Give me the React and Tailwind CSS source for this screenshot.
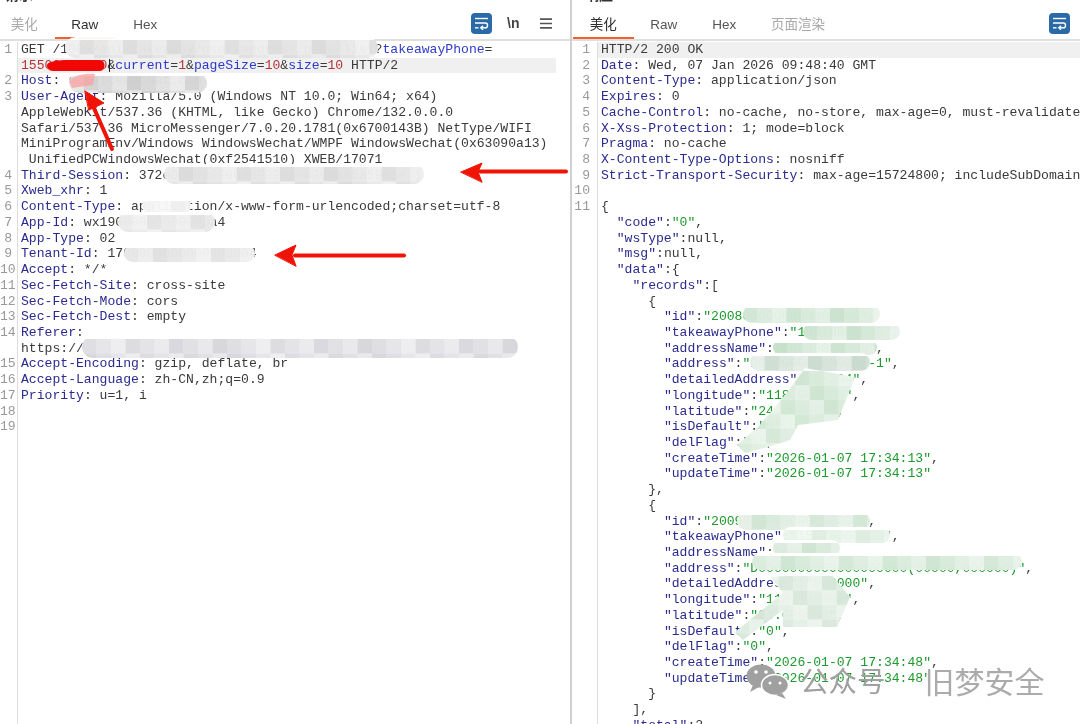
import React from "react";

const KEY = "text-[#2b2b8f]";
const VAL = "text-[#3a3a3a]";
const PARAM = "text-[#2d3ac8]";
const NUM = "text-[#b5343a]";
const STR = "text-[#1d9a2d]";

const header = (n, k, v) => ({ n, parts: [[k, KEY], [": " + v, VAL]] });
const plain = (n, v) => ({ n, parts: [[v, VAL]] });

const requestRows = [
  {
    n: 1,
    parts: [
      ["GET /1000/api/takeaway/user/address/page/list?", VAL],
      ["takeawayPhone", PARAM],
      ["=", VAL],
    ],
  },
  {
    highlight: true,
    parts: [
      ["15500000000", NUM],
      ["&", VAL],
      ["current", PARAM],
      ["=", VAL],
      ["1", NUM],
      ["&", VAL],
      ["pageSize", PARAM],
      ["=", VAL],
      ["10", NUM],
      ["&", VAL],
      ["size", PARAM],
      ["=", VAL],
      ["10", NUM],
      [" HTTP/2", VAL],
    ],
  },
  header(2, "Host", "servicewechat.com"),
  header(3, "User-Agent", "Mozilla/5.0 (Windows NT 10.0; Win64; x64)"),
  plain(null, "AppleWebKit/537.36 (KHTML, like Gecko) Chrome/132.0.0.0"),
  plain(null, "Safari/537.36 MicroMessenger/7.0.20.1781(0x6700143B) NetType/WIFI"),
  plain(null, "MiniProgramEnv/Windows WindowsWechat/WMPF WindowsWechat(0x63090a13)"),
  plain(null, " UnifiedPCWindowsWechat(0xf2541510) XWEB/17071"),
  header(4, "Third-Session", "372e000000000000000000000a85a590ce )"),
  header(5, "Xweb_xhr", "1"),
  header(6, "Content-Type", "application/x-www-form-urlencoded;charset=utf-8"),
  header(7, "App-Id", "wx19000000000000a4"),
  header(8, "App-Type", "02"),
  header(9, "Tenant-Id", "1700000000000000004"),
  header(10, "Accept", "*/*"),
  header(11, "Sec-Fetch-Site", "cross-site"),
  header(12, "Sec-Fetch-Mode", "cors"),
  header(13, "Sec-Fetch-Dest", "empty"),
  { n: 14, parts: [["Referer", KEY], [":", VAL]] },
  plain(null, "https://"),
  header(15, "Accept-Encoding", "gzip, deflate, br"),
  header(16, "Accept-Language", "zh-CN,zh;q=0.9"),
  header(17, "Priority", "u=1, i"),
  { n: 18, parts: [] },
  { n: 19, parts: [] },
];

const jsonLine = (indent, key, value, type, comma = true) => ({
  parts: [
    [" ".repeat(indent), VAL],
    [`"${key}"`, KEY],
    [":", VAL],
    [type === "str" ? `"${value}"` : value, type === "str" ? STR : VAL],
    [comma ? "," : "", VAL],
  ],
});
const punct = (indent, text) => ({ parts: [[" ".repeat(indent) + text, VAL]] });

const record = (id, name, address, detail, created) => [
  jsonLine(8, "id", id, "str"),
  jsonLine(8, "takeawayPhone", "15570000000", "str"),
  jsonLine(8, "addressName", name, "str"),
  jsonLine(8, "address", address, "str"),
  jsonLine(8, "detailedAddress", detail, "str"),
  jsonLine(8, "longitude", "118.000000", "str"),
  jsonLine(8, "latitude", "24.000000", "str"),
  jsonLine(8, "isDefault", "0", "str"),
  jsonLine(8, "delFlag", "0", "str"),
  jsonLine(8, "createTime", created, "str"),
  jsonLine(8, "updateTime", created, "str", false),
];

const responseRows = [
  { n: 1, highlight: true, parts: [["HTTP/2 200 OK", VAL]] },
  header(2, "Date", "Wed, 07 Jan 2026 09:48:40 GMT"),
  header(3, "Content-Type", "application/json"),
  header(4, "Expires", "0"),
  header(5, "Cache-Control", "no-cache, no-store, max-age=0, must-revalidate"),
  header(6, "X-Xss-Protection", "1; mode=block"),
  header(7, "Pragma", "no-cache"),
  header(8, "X-Content-Type-Options", "nosniff"),
  header(9, "Strict-Transport-Security", "max-age=15724800; includeSubDomains"),
  { n: 10, parts: [] },
  { n: 11, parts: [["{", VAL]] },
  jsonLine(2, "code", "0", "str"),
  jsonLine(2, "wsType", "null"),
  jsonLine(2, "msg", "null"),
  { parts: [["  ", VAL], ['"data"', KEY], [":{", VAL]] },
  { parts: [["    ", VAL], ['"records"', KEY], [":[", VAL]] },
  punct(6, "{"),
  ...record("2008000000000000000", "00000000000", "D00000000000000-1", "0-204", "2026-01-07 17:34:13"),
  punct(6, "},"),
  punct(6, "{"),
  ...record("2009000000000000000", "00000", "D0000000000000000000(00000,000000)", "000000", "2026-01-07 17:34:48"),
  punct(6, "}"),
  punct(4, "],"),
  { parts: [["    ", VAL], ['"total"', KEY], [":2", VAL]] },
];

const pill = (id, x, y, w, h, color) => {
  const r = h / 2;
  return {
    id,
    color,
    box: [x, y, w, h],
    d: `M${x + r},${y}H${x + w - r}A${r},${r} 0 0 1 ${x + w - r},${y + h}H${x + r}A${r},${r} 0 0 1 ${x + r},${y}Z`,
  };
};

const smears = [
  pill("a", 65, 37, 313, 21, "#cdcdcd"),
  pill("b", 69, 73, 138, 20, "#bdbdbd"),
  pill("c", 164, 164, 260, 20, "#cdcdcd"),
  pill("d", 142, 198, 49, 16, "#e6e6e6"),
  pill("e", 118, 212, 97, 20, "#d8d8d8"),
  pill("f", 124, 245, 131, 17, "#d4d4d4"),
  pill("g", 82, 336, 436, 22, "#c6c6ce"),
  pill("h", 743, 305, 137, 18, "#b8d8bc"),
  pill("i", 803, 323, 97, 17, "#b8d8bc"),
  pill("j", 773, 340, 104, 15, "#b0d4b5"),
  pill("k", 750, 353, 120, 18, "#b4ccbc"),
  {
    id: "l",
    color: "#bcdcc0",
    box: [737, 368, 118, 85],
    d: "M805,368L855,377L838,420L798,425L790,440L775,445L745,453L737,445L760,425L785,395Z",
  },
  pill("m", 737, 512, 133, 18, "#c0dcc4"),
  pill("n", 783, 527, 107, 16, "#cfe5d2"),
  pill("o", 773, 540, 67, 16, "#b8d8bc"),
  pill("p", 752, 553, 270, 17, "#bcdcc0"),
  {
    id: "q",
    color: "#c4dcc8",
    box: [735, 573, 115, 67],
    d: "M830,573L850,597L837,627L783,627L783,610L743,640L735,632L783,593L770,577Z",
  },
];

function Smear({ smear, seed }) {
  const tile = 14.5;
  const [x, y, w, h] = smear.box;
  const tiles = [];
  for (let i = 0; i * tile < w; i += 1) {
    for (let j = 0; j * tile < h; j += 1) {
      const shade = ((i * 37 + j * 53 + seed * 11) % 10) / 10;
      tiles.push(
        <rect
          key={`${i}-${j}`}
          x={x + i * tile}
          y={y + 3 + j * tile}
          width={tile}
          height={tile}
          fill={smear.color}
          opacity={0.3 + shade * 0.45}
        />
      );
    }
  }
  return (
    <g>
      <clipPath id={`clip-${smear.id}`}>
        <path d={smear.d} />
      </clipPath>
      <path d={smear.d} fill="#ffffff" opacity="0.95" />
      <g clipPath={`url(#clip-${smear.id})`}>{tiles}</g>
    </g>
  );
}

function Overlay() {
  return (
    <svg className="absolute inset-0 h-[724px] w-[1080px]" viewBox="0 0 1080 724">
      {smears.map((smear, i) => (
        <Smear key={smear.id} smear={smear} seed={i} />
      ))}
      {/* phone number scribble and the caret after it */}
      <path d="M47,65.5C47,61 58,60 75,60H100C106,60 106,71 100,71H55C49,71 47,69 47,65.5Z" fill="#f20707" />
      <path d="M109.5,59V72" stroke="#222222" strokeWidth="1" />
      <path d="M69,81C74,75 85,73 95,74L93,85L72,88Z" fill="#f8a0a0" opacity="0.75" />
      {/* arrows */}
      <g fill="#f01408" stroke="#f01408" strokeLinejoin="round" strokeLinecap="round">
        <path d="M112,149L93,106" strokeWidth="4" fill="none" />
        <path d="M85,91L104,103L89,110Z" strokeWidth="1" />
        <path d="M566,171.5H480" strokeWidth="4" fill="none" />
        <path d="M461,172L482,163L478,172L482,182Z" strokeWidth="1" />
        <path d="M404,255.5H295" strokeWidth="4" fill="none" />
        <path d="M275,255L296,245L292,255L296,266Z" strokeWidth="1" />
      </g>
      {/* wechat mark of the watermark */}
      <g fill="#a0a0a0">
        <ellipse cx="761" cy="676" rx="14.5" ry="11.5" />
        <path d="M753,685L750,692L759,687Z" />
        <ellipse cx="775" cy="685" rx="13.5" ry="10.5" stroke="#ffffff" strokeWidth="1.5" />
        <path d="M782,693L786,699L776,695Z" />
        <circle cx="756" cy="672" r="1.8" fill="#ffffff" />
        <circle cx="766" cy="672" r="1.8" fill="#ffffff" />
        <circle cx="770" cy="683" r="1.5" fill="#ffffff" />
        <circle cx="780" cy="683" r="1.5" fill="#ffffff" />
      </g>
    </svg>
  );
}

function WrapIcon() {
  return (
    <div className="flex h-[21px] w-[21px] items-center justify-center rounded-[4px] bg-[#2a6aa6]">
      <svg width="15" height="13" viewBox="0 0 15 13" fill="none" stroke="#ffffff" strokeWidth="1.4">
        <path d="M1,1.5H14" />
        <path d="M1,6H11.5C14.2,6 14.2,10.8 11.5,10.8H7" />
        <path d="M9,8.8L6.8,10.8L9,12.8" />
        <path d="M1,10.8H4.5" />
      </svg>
    </div>
  );
}

function Tab({ label, active, muted, wide }) {
  const color = muted ? "text-[#a9a9a9]" : active ? "text-[#2f2f2f]" : "text-[#555555]";
  return (
    <div
      className={`flex h-[31px] items-center justify-center border-b-2 pt-[5px] text-[13.5px] ${color} ${
        active ? "border-[#f0622c]" : "border-transparent"
      } ${wide ? "w-[87px]" : "w-[60.5px]"}`}
    >
      {label}
    </div>
  );
}

function CodeRow({ row, gutter, highlightWidth, pad }) {
  return (
    <div className="flex h-[15.72px] shrink-0">
      <div className={`shrink-0 border-r border-[#dddddd] text-right text-[#999999] ${gutter} ${pad}`}>
        {row.n ?? ""}
      </div>
      <div className={`whitespace-pre pl-[3px] ${row.highlight ? "bg-[#f0f0f0]" : ""} ${highlightWidth}`}>
        {row.parts.map(([text, cls], i) => (
          <span key={i} className={cls}>
            {text}
          </span>
        ))}
      </div>
    </div>
  );
}

function CodeView({ rows, gutter, highlightWidth, pad }) {
  return (
    <div className="flex min-h-0 flex-1 flex-col overflow-hidden pt-[1px] font-['Liberation_Mono',monospace] text-[13.1px] leading-[15.72px]">
      {rows.map((row, i) => (
        <CodeRow key={i} row={row} gutter={gutter} highlightWidth={highlightWidth} pad={pad} />
      ))}
      <div className={`flex-1 shrink-0 border-r border-[#dddddd] ${gutter}`} />
    </div>
  );
}

function PanelTitle({ text, className }) {
  return (
    <div className="h-[8px] overflow-hidden">
      <div className={`-mt-[13px] text-[14px] font-bold leading-[17px] text-[#333333] ${className}`}>{text}</div>
    </div>
  );
}

export default function App() {
  return (
    <div className="relative h-[724px] w-[1080px] overflow-hidden bg-white font-['Liberation_Sans','Noto_Sans_CJK_SC',sans-serif] blur-[0.5px]">
      <div className="flex h-full">
        <div className="flex w-[570px] shrink-0 flex-col">
          <PanelTitle text="请求" className="pl-[5px]" />
          <div className="flex h-[33px] items-start border-b-2 border-[#dfdfdf]">
            <div className="-ml-[6px] flex">
              <Tab label="美化" muted />
              <Tab label="Raw" active />
              <Tab label="Hex" />
            </div>
            <div className="ml-auto mr-[18px] flex items-center pt-[5px]">
              <WrapIcon />
              <span className="ml-[15px] w-[14px] text-[14px] font-bold leading-[21px] text-[#444444]">\n</span>
              <svg className="ml-[19px]" width="12" height="11" viewBox="0 0 12 11" stroke="#555555" strokeWidth="1.7">
                <path d="M0,1.2H12M0,5.5H12M0,9.8H12" />
              </svg>
            </div>
          </div>
          <CodeView rows={requestRows} gutter="w-[18px]" pad="pr-[5px]" highlightWidth="w-[538px]" />
        </div>

        <div className="flex min-w-0 flex-1 flex-col border-l-2 border-[#d0d0d0]">
          <PanelTitle text="响应" className="pl-[13px]" />
          <div className="flex h-[33px] items-start border-b-2 border-[#dfdfdf]">
            <div className="ml-[1px] flex">
              <Tab label="美化" active />
              <Tab label="Raw" />
              <Tab label="Hex" />
              <Tab label="页面渲染" muted wide />
            </div>
            <div className="ml-auto mr-[10px] flex items-center pt-[5px]">
              <WrapIcon />
            </div>
          </div>
          <CodeView rows={responseRows} gutter="w-[26px]" pad="pr-[7px]" highlightWidth="flex-1" />
        </div>
      </div>

      <Overlay />

      <div className="absolute left-[800px] top-[660px] flex items-center font-['Noto_Sans_CJK_SC',sans-serif] leading-[40px]">
        <span className="text-[28.5px] text-[#a0a0a0]">公众号</span>
        <span className="ml-[39px] text-[30px] text-[#ababab]">旧梦安全</span>
      </div>
    </div>
  );
}
